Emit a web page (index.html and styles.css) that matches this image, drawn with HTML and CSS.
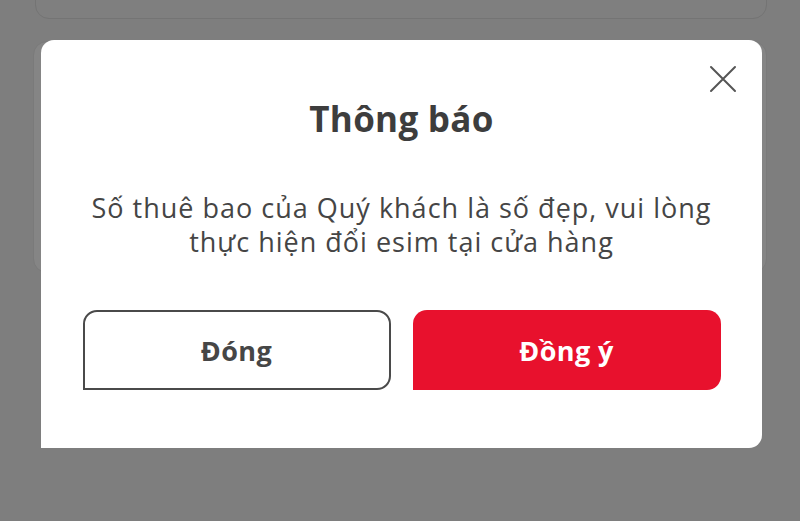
FILE: index.html
```html
<!DOCTYPE html>
<html lang="vi">
<head>
<meta charset="utf-8">
<link rel="stylesheet" href="styles.css">
</head>
<body>
<div class="page">
  <div class="bg-card top"></div>
  <div class="bg-card mid"></div>
  <div class="modal">
    <button class="close" aria-label="Đóng">
      <svg width="28" height="28" viewBox="0 0 28 28"><path d="M2 2 L26 26 M26 2 L2 26" stroke="#555" stroke-width="2" stroke-linecap="round"/></svg>
    </button>
    <h1 class="title">Thông báo</h1>
    <p class="msg">Số thuê bao của Quý khách là số đẹp, vui lòng<br>thực hiện đổi esim tại cửa hàng</p>
    <div class="actions">
      <button class="btn outline">Đóng</button>
      <button class="btn primary">Đồng ý</button>
    </div>
  </div>
</div>
</body>
</html>
```
FILE: styles.css
```css
html, body { margin: 0; padding: 0; }
body { background: #7e7e7e; width: 800px; height: 521px; overflow: hidden; font-family: "Open Sans", "Noto Sans", sans-serif; }
.page { position: relative; width: 800px; height: 521px; display: flex; flex-direction: column; }
.bg-card { border: 1px solid #747474; border-radius: 14px; background: #7f7f7f; box-sizing: border-box; }
.bg-card.top { margin: -40px 33px 0 35px; height: 59px; }
.bg-card.mid { margin: 22px 33px 0 33px; height: 232px; background: #858585; border-color: #7a7a7a; }
.modal { position: absolute; left: 41px; top: 40px; width: 721px; height: 408px; background: #fff; border-radius: 13px 13px 13px 0; box-sizing: border-box; display: flex; flex-direction: column; align-items: center; padding-top: 59px; }
.close { position: absolute; right: 25px; top: 25px; width: 28px; height: 28px; padding: 0; border: 0; background: none; }
.close svg { display: block; }
.title { margin: 0; font-size: 35px; font-weight: 700; color: #3d3d3d; line-height: 40px; letter-spacing: 0.3px; }
.msg { margin: 52px 0 0; text-align: center; font-size: 27px; line-height: 34px; color: #454545; letter-spacing: 1px; }
.actions { margin-top: 51px; display: flex; gap: 22px; }
.btn { width: 308px; height: 80px; box-sizing: border-box; font-family: inherit; font-size: 27px; font-weight: 700; letter-spacing: 0.4px; border-radius: 14px 14px 14px 0; }
.btn.outline { background: #fff; border: 2px solid #4a4a4a; color: #464646; }
.btn.primary { background: #e8112d; border: 0; color: #fff; }
```
